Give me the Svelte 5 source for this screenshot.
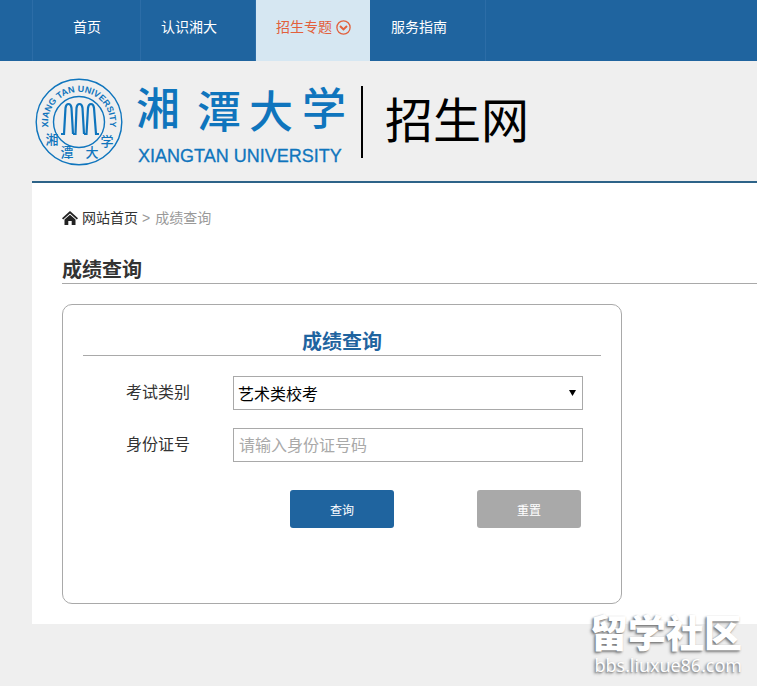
<script lang="ts">
  interface NavItem {
    label: string;
    href: string;
    dropdown?: boolean;
    active?: boolean;
  }

  const navItems: NavItem[] = [
    { label: "首页", href: "#home" },
    { label: "认识湘大", href: "#about", dropdown: true },
    { label: "招生专题", href: "#topics", dropdown: true, active: true },
    { label: "服务指南", href: "#guide", dropdown: true },
  ];

  const examTypes: string[] = ["艺术类校考"];

  let examType = $state(examTypes[0]);
  let idNumber = $state("");

  function handleSubmit(e: SubmitEvent) {
    e.preventDefault();
  }

  function handleReset() {
    examType = examTypes[0];
    idNumber = "";
  }
</script>

<div class="page">
  <nav class="nav">
    <ul class="nav-list">
      {#each navItems as item (item.href)}
        <li class="nav-item" class:dropdown={item.dropdown} class:active={item.active}>
          <a href={item.href}>
            {item.label}
            {#if item.active}
              <svg class="nav-icon" viewBox="0 0 15 15" aria-hidden="true">
                <circle cx="7.5" cy="7.5" r="6.6" />
                <path d="M4 6l3.500 3.400L11 6" />
              </svg>
            {/if}
          </a>
        </li>
      {/each}
    </ul>
  </nav>

  <header class="header">
    <svg class="seal" viewBox="0 0 88 88" aria-hidden="true">
      <defs>
        <path id="seal-arc" d="M13.500 50.500A31 31 0 1 1 74.500 50.500" />
      </defs>
      <circle class="ring" cx="44" cy="44" r="42.800" />
      <circle class="ring" cx="44" cy="44" r="25.500" />
      <text class="seal-latin">
        <textPath href="#seal-arc" startOffset="50%">XIANG TAN UNIVERSITY</textPath>
      </text>
      <!-- three tall arches standing on short feet -->
      <g class="arches">
        <path d="M26 56h3L30.500 30q.5-4 3-4t3 4L38 56" />
        <path d="M38 56h2.500L41.500 30q.5-4 3-4t3 4L49 56" />
        <path d="M49 56h2.500L53 30q.5-4 3-4t3 4L61 56h3" />
      </g>
      <g class="seal-han">
        <text x="17" y="66">湘</text>
        <text x="32" y="79">潭</text>
        <text x="57" y="79">大</text>
        <text x="72" y="68">学</text>
      </g>
    </svg>

    <svg class="wordmark" viewBox="0 0 210 90" role="img" aria-label="湘潭大学">
      <g class="wordmark-han">
        <text x="-1" y="47">湘</text>
        <text x="60" y="50">潭</text>
        <text x="112" y="50">大</text>
        <text x="165" y="47">学</text>
      </g>
      <text class="wordmark-latin" x="1" y="84">XIANGTAN UNIVERSITY</text>
    </svg>

    <span class="site-name">招生网</span>
  </header>

  <main class="content">
    <div class="breadcrumb">
      <svg class="home-icon" viewBox="0 0 16 14" aria-hidden="true">
        <path d="M0 7.200L8 0l8 7.200-1.200 1.200L8 2.400 1.200 8.400z" />
        <path d="M2.500 8.600L8 3.800l5.500 4.800V14H9.700v-4H6.300v4H2.500z" />
      </svg>
      <a href="#home">网站首页</a>
      <span class="separator">&gt;</span>
      <span>成绩查询</span>
    </div>

    <h1 class="page-title">成绩查询</h1>

    <form class="panel" onsubmit={handleSubmit} onreset={handleReset}>
      <h2 class="panel-title">成绩查询</h2>

      <div class="row">
        <label for="exam-type">考试类别</label>
        <div class="select-wrap">
          <select id="exam-type" bind:value={examType}>
            {#each examTypes as type}
              <option value={type}>{type}</option>
            {/each}
          </select>
          <svg class="select-arrow" viewBox="0 0 7 6" aria-hidden="true">
            <path d="M0 0h7L3.500 6z" />
          </svg>
        </div>
      </div>

      <div class="row">
        <label for="id-number">身份证号</label>
        <input
          id="id-number"
          type="text"
          placeholder="请输入身份证号码"
          bind:value={idNumber}
        />
      </div>

      <div class="actions">
        <button class="btn primary" type="submit">查询</button>
        <button class="btn" type="reset">重置</button>
      </div>
    </form>
  </main>

  <div class="watermark">
    <strong>留学社区</strong>
    <span>bbs.liuxue86.com</span>
  </div>
</div>

<style>
  :global(body) {
    margin: 0;
    background: #efefef;
  }

  .page {
    --blue: #1f649f;
    --logo-blue: #0f75bd;
    --line: #a9a9a9;
    position: relative;
    min-height: 100vh;
    font-family: "Liberation Sans", "Noto Sans CJK SC", sans-serif;
    font-size: 14px;
    line-height: 20px;
    color: #333;
  }

  /* Top navigation */
  .nav {
    background: var(--blue);
    padding-left: 32px;
  }

  .nav-list {
    display: flex;
    margin: 0;
    padding: 0;
    list-style: none;
  }

  .nav-item {
    box-sizing: border-box;
    height: 61px;
    padding: 17px 39px 0 40px;
    border-left: 1px solid #2c6da7;
  }

  .nav-item.dropdown {
    width: 115px;
    padding: 17px 0 0 20px;
  }

  .nav-item.dropdown:last-child {
    width: 116px;
    border-right: 1px solid #2c6da7;
  }

  .nav-item.active {
    background: #d6e7f2;
  }

  .nav-item.active + .nav-item {
    border-left-color: var(--blue);
  }

  .nav-item a {
    display: flex;
    align-items: center;
    gap: 4px;
    color: #fff;
    text-decoration: none;
    white-space: nowrap;
  }

  .nav-item.active a {
    color: #e2603c;
  }

  .nav-icon {
    width: 15px;
    height: 15px;
    fill: none;
    stroke: currentColor;
    stroke-width: 1.3;
  }

  .nav-icon path {
    stroke-width: 2;
  }

  /* Logo row */
  .header {
    display: flex;
    align-items: flex-start;
    height: 103px;
    margin-left: 32px;
    padding: 17px 0 0 3px;
    border-bottom: 2px solid #2d6388;
  }

  .seal {
    width: 88px;
    height: 88px;
    margin-right: 14px;
    fill: var(--logo-blue);
  }

  .ring {
    fill: none;
    stroke: var(--logo-blue);
    stroke-width: 1.4;
  }

  .seal-latin {
    font-size: 9px;
    font-weight: bold;
    text-anchor: middle;
  }

  .arches {
    fill: none;
    stroke: var(--logo-blue);
    stroke-width: 2.2;
  }

  .seal-han {
    font-size: 13px;
    font-weight: 500;
    text-anchor: middle;
  }

  .wordmark {
    width: 210px;
    height: 90px;
    overflow: visible;
    fill: var(--logo-blue);
  }

  .wordmark-han {
    font-size: 44px;
    font-weight: 500;
  }

  .wordmark-latin {
    font-size: 18px;
    stroke: var(--logo-blue);
    stroke-width: 0.3;
  }

  .site-name {
    margin: 8px 0 0 14px;
    padding-left: 22px;
    border-left: 2px solid #000;
    font-size: 48px;
    line-height: 72px;
    color: #000;
  }

  /* Content */
  .content {
    margin-left: 32px;
    padding: 25px 0 20px 30px;
    background: #fff;
  }

  .breadcrumb {
    display: flex;
    align-items: center;
    gap: 4px;
    color: #999;
  }

  .breadcrumb a {
    color: #333;
    text-decoration: none;
  }

  .separator {
    margin-right: 1px;
  }

  .home-icon {
    width: 16px;
    height: 14px;
    fill: #222;
  }

  .page-title {
    margin: 29px 0 20px;
    border-bottom: 1px solid var(--line);
    font-size: 20px;
    line-height: 26px;
  }

  .panel {
    box-sizing: border-box;
    max-width: 560px;
    min-height: 300px;
    padding: 24px 20px;
    border: 1px solid var(--line);
    border-radius: 10px;
  }

  .panel-title {
    margin: 0 0 20px;
    border-bottom: 1px solid var(--line);
    font-size: 20px;
    line-height: 26px;
    text-align: center;
    color: var(--blue);
  }

  .row {
    display: flex;
    align-items: center;
    margin: 0 18px 18px 43px;
  }

  .row label {
    flex: none;
    width: 107px;
    font-size: 16px;
  }

  .select-wrap {
    position: relative;
    flex: 1;
  }

  .row select,
  .row input {
    box-sizing: border-box;
    width: 100%;
    height: 34px;
    padding: 2px 5px 0;
    border: 1px solid var(--line);
    border-radius: 0;
    background: #fff;
    font-family: inherit;
    font-size: 16px;
    color: #000;
    appearance: none;
  }

  .row select {
    padding: 2px 4px 0;
  }

  .row input::placeholder {
    color: #a9a9a9;
  }

  .select-arrow {
    position: absolute;
    top: 14px;
    right: 7px;
    width: 7px;
    height: 6px;
    pointer-events: none;
  }

  .actions {
    display: flex;
    justify-content: space-between;
    margin: 28px 20px 0 207px;
  }

  .btn {
    width: 104px;
    height: 38px;
    padding: 0;
    border: 0;
    border-radius: 3px;
    background: var(--line);
    font-family: inherit;
    font-size: 12px;
    color: #fff;
    cursor: pointer;
  }

  .btn.primary {
    background: var(--blue);
  }

  /* Site stamp over the bottom right corner */
  .watermark {
    position: absolute;
    right: 15px;
    bottom: 10px;
    display: flex;
    flex-direction: column;
    align-items: flex-end;
    color: #fff;
    text-shadow:
      -1px 1px 2px #777,
      -2px 2px 3px #aaa;
  }

  .watermark strong {
    font-size: 38px;
    font-weight: 900;
    line-height: 40px;
  }

  .watermark span {
    font-family: "Open Sans", sans-serif;
    font-size: 18px;
    line-height: 22px;
  }
</style>
